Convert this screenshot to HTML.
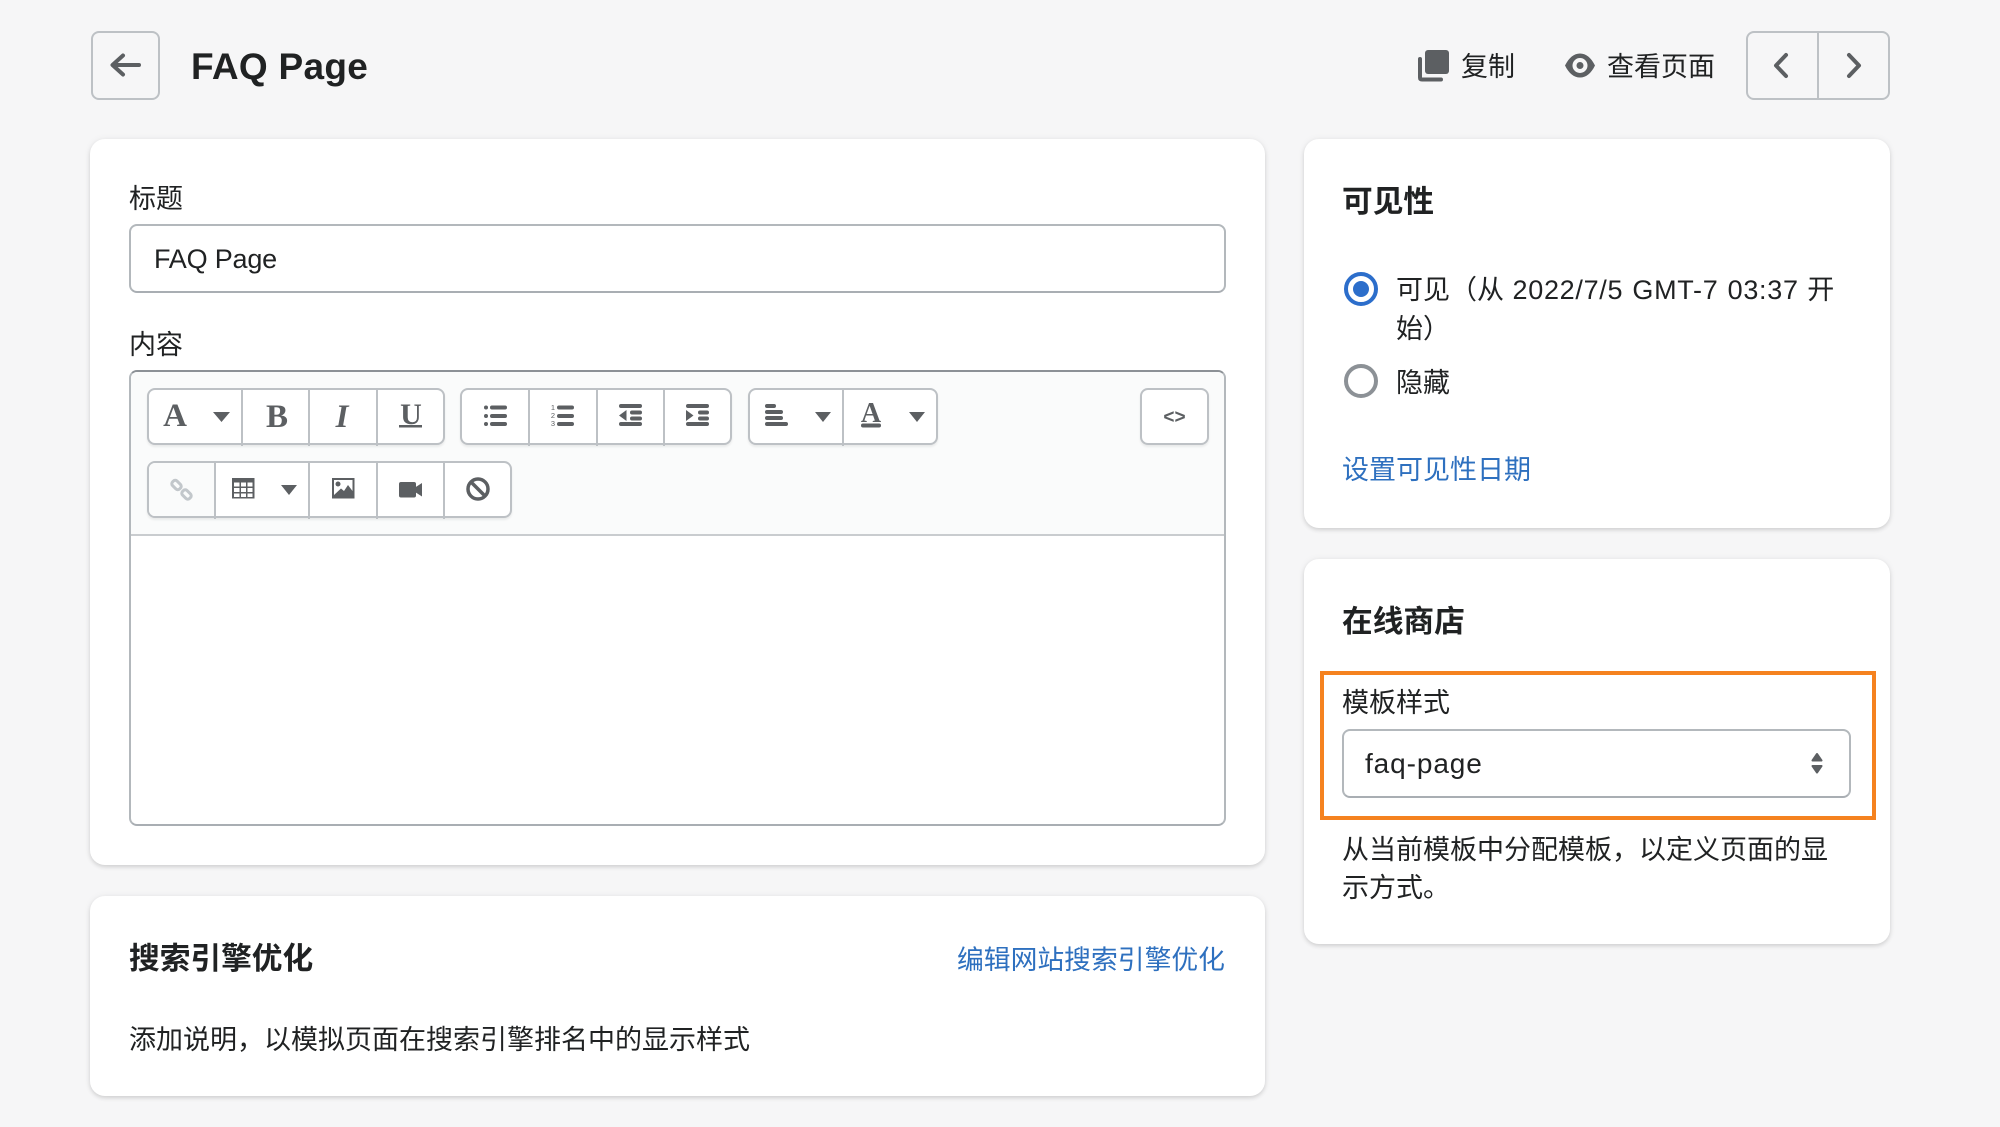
<!DOCTYPE html>
<html lang="zh-CN">
<head>
<meta charset="utf-8">
<title>FAQ Page</title>
<style>
html,body{margin:0;padding:0;width:2000px;height:1127px;overflow:hidden;background:#f6f6f7}
body{position:relative;font-family:"Liberation Sans","Noto Sans CJK SC",sans-serif;color:#202223;font-size:27px}
.t{position:absolute;white-space:nowrap;line-height:40px;height:40px}
.h{font-weight:700;font-size:30.7px}
.l{color:#2e70bf}
.card{position:absolute;background:#fff;border-radius:15px;box-shadow:0 0 8px rgba(23,24,24,.05),0 2px 4px rgba(0,0,0,.13)}
.box{position:absolute;box-sizing:border-box;background:#fff;border:2px solid #b3b8bc;border-bottom-color:#a9aeb3;border-radius:8px}
.btn{position:absolute;box-sizing:border-box;border:2px solid #bdc1c5;border-radius:8px;background:#fff;box-shadow:0 2px 2px rgba(0,0,0,.07)}
.sep{position:absolute;width:2px;background:#bdc1c5}
svg{position:absolute;left:0;top:0}
.s{font-family:"Liberation Serif",serif;font-weight:700;fill:#5c5f62;text-anchor:middle}
</style>
</head>
<body>
<!-- header -->
<div class="btn" style="left:91px;top:31px;width:69px;height:69px;background:#f6f6f7;box-shadow:none"></div>
<div class="t" style="left:191px;top:47px;font-size:37px;font-weight:700;letter-spacing:.3px">FAQ Page</div>
<div class="t" style="left:1461px;top:47px">复制</div>
<div class="t" style="left:1607px;top:47px">查看页面</div>
<div class="btn" style="left:1746px;top:31px;width:144px;height:69px;background:#f6f6f7;box-shadow:none"></div>
<div class="sep" style="left:1817px;top:32px;height:67px"></div>

<!-- cards -->
<div class="card" style="left:90px;top:139px;width:1175px;height:726px"></div>
<div class="card" style="left:90px;top:896px;width:1175px;height:200px"></div>
<div class="card" style="left:1304px;top:139px;width:586px;height:389px"></div>
<div class="card" style="left:1304px;top:559px;width:586px;height:385px"></div>

<!-- title field -->
<div class="t" style="left:129px;top:179px">标题</div>
<div class="box" style="left:129px;top:224px;width:1097px;height:69px"></div>
<div class="t" style="left:154px;top:239px;font-size:27px;letter-spacing:-.2px">FAQ Page</div>

<!-- editor -->
<div class="t" style="left:129px;top:325px">内容</div>
<div class="box" style="left:129px;top:370px;width:1097px;height:456px;border-top-color:#8c9196"></div>
<div style="position:absolute;left:131px;top:372px;width:1093px;height:162px;background:#fafbfb;border-radius:6px 6px 0 0;border-bottom:2px solid #c9cccf"></div>

<div class="btn" style="left:146.5px;top:387.5px;width:298.5px;height:57.5px"></div>
<div class="btn" style="left:460px;top:387.5px;width:272px;height:57.5px"></div>
<div class="btn" style="left:747.5px;top:387.5px;width:190.5px;height:57.5px"></div>
<div class="btn" style="left:1140px;top:387.5px;width:69px;height:57.5px"></div>
<div class="btn" style="left:146.5px;top:460.5px;width:365.5px;height:57.5px"></div>
<div style="position:absolute;left:149px;top:463px;width:65px;height:53px;background:#fafbfb;border-radius:6px 0 0 6px"></div>

<div class="sep" style="left:241px;top:388px;height:58px"></div>
<div class="sep" style="left:308px;top:388px;height:58px"></div>
<div class="sep" style="left:376px;top:388px;height:58px"></div>
<div class="sep" style="left:528px;top:388px;height:58px"></div>
<div class="sep" style="left:596px;top:388px;height:58px"></div>
<div class="sep" style="left:663px;top:388px;height:58px"></div>
<div class="sep" style="left:842px;top:388px;height:58px"></div>
<div class="sep" style="left:214px;top:461px;height:58px"></div>
<div class="sep" style="left:308px;top:461px;height:58px"></div>
<div class="sep" style="left:376px;top:461px;height:58px"></div>
<div class="sep" style="left:443px;top:461px;height:58px"></div>

<!-- SEO -->
<div class="t h" style="left:129px;top:939px">搜索引擎优化</div>
<div class="t l" style="left:957px;top:940px;font-size:26.8px">编辑网站搜索引擎优化</div>
<div class="t" style="left:129px;top:1020px">添加说明，以模拟页面在搜索引擎排名中的显示样式</div>

<!-- visibility -->
<div class="t h" style="left:1342px;top:182px">可见性</div>
<div class="t" style="left:1396px;top:270px;word-spacing:1px"><span style="letter-spacing:0">可见（从</span> <span style="letter-spacing:.7px">2022/7/5 GMT-7 03:37</span> 开</div>
<div class="t" style="left:1396px;top:309px">始）</div>
<div class="t" style="left:1396px;top:363px">隐藏</div>
<div class="t l" style="left:1342px;top:450px">设置可见性日期</div>

<!-- online store -->
<div class="t h" style="left:1342px;top:602px">在线商店</div>
<div style="position:absolute;box-sizing:border-box;left:1320px;top:671px;width:556px;height:149px;border:4px solid #f5821f"></div>
<div class="t" style="left:1342px;top:683px">模板样式</div>
<div class="box" style="left:1342px;top:729px;width:509px;height:69px"></div>
<div class="t" style="left:1365px;top:744px;font-size:28px;letter-spacing:.9px">faq-page</div>
<div class="t" style="left:1342px;top:830px">从当前模板中分配模板，以定义页面的显</div>
<div class="t" style="left:1342px;top:868px">示方式。</div>

<svg width="2000" height="1127" viewBox="0 0 2000 1127" fill="none">
  <!-- back arrow -->
  <path d="M139 65H114M123 55.5L112.5 65L123 74.5" stroke="#5c5f62" stroke-width="4" stroke-linecap="round" stroke-linejoin="round"/>
  <!-- duplicate -->
  <rect x="1425" y="50" width="24" height="24" rx="3" fill="#5c5f62"/>
  <path d="M1420 59V77.5Q1420 79.5 1422 79.5H1441" stroke="#5c5f62" stroke-width="4" stroke-linecap="round"/>
  <!-- eye -->
  <path fill-rule="evenodd" fill="#5c5f62" d="M1565 65.5C1569 57.5 1574 53.5 1580 53.5S1591 57.5 1595 65.5C1591 73.5 1586 77.5 1580 77.5S1569 73.5 1565 65.5ZM1580 58A7.5 7.5 0 1 0 1580 73A7.5 7.5 0 1 0 1580 58Z"/>
  <circle cx="1580" cy="65.5" r="3.5" fill="#5c5f62"/>
  <!-- nav chevrons -->
  <path d="M1786 55L1776 65.5L1786 76M1849 55L1859 65.5L1849 76" stroke="#5c5f62" stroke-width="4" stroke-linecap="round" stroke-linejoin="round"/>

  <!-- row 1 group 1 -->
  <text class="s" x="175" y="426" font-size="33">A</text>
  <path d="M213 412H230L221.5 422Z" fill="#5c5f62"/>
  <text class="s" x="277" y="427" font-size="33">B</text>
  <text class="s" x="342" y="427" font-size="33" font-style="italic">I</text>
  <text class="s" x="411" y="424" font-size="30">U</text>
  <rect x="399" y="425" width="23" height="2.5" fill="#5c5f62"/>

  <!-- lists and alignment -->
  <g fill="#5c5f62">
    <circle cx="486" cy="407.5" r="2"/><circle cx="486" cy="416" r="2"/><circle cx="486" cy="424" r="2"/>
    <rect x="490" y="405.5" width="17" height="4" rx="2"/><rect x="490" y="414" width="17" height="4" rx="2"/><rect x="490" y="422" width="17" height="4" rx="2"/>
    <!-- ordered -->
    <rect x="557" y="405.5" width="17" height="4" rx="2"/><rect x="557" y="414" width="17" height="4" rx="2"/><rect x="557" y="422" width="17" height="4" rx="2"/>
    <!-- outdent -->
    <rect x="619" y="404" width="23" height="4" rx="2"/><rect x="630" y="410.5" width="12" height="4" rx="2"/><rect x="630" y="416.5" width="12" height="4" rx="2"/><rect x="619" y="422" width="23" height="4" rx="2"/>
    <path d="M619 415.5L626.5 410V421Z"/>
    <!-- indent -->
    <rect x="686" y="404" width="23" height="4" rx="2"/><rect x="698" y="410.5" width="11" height="4" rx="2"/><rect x="698" y="416.5" width="11" height="4" rx="2"/><rect x="686" y="422" width="23" height="4" rx="2"/>
    <path d="M693.5 415.5L686 410V421Z"/>
    <!-- align left -->
    <rect x="765" y="404" width="11" height="4" rx="2"/><rect x="765" y="410" width="18" height="4" rx="2"/><rect x="765" y="416" width="18" height="4" rx="2"/><rect x="765" y="422" width="23" height="4" rx="2"/>
    <path d="M815 412H831L823 422Z"/>
    <!-- colour caret -->
    <path d="M909 412H925L917 422Z"/>
    <rect x="861" y="423.5" width="20" height="4" rx="2"/>
    <!-- row 2 carets -->
    <path d="M281 485H297L289 495Z"/>
  </g>
  <g font-family="Liberation Sans" font-size="7.5" fill="#5c5f62" text-anchor="middle">
    <text x="553" y="410">1</text><text x="553" y="418">2</text><text x="553" y="426">3</text>
  </g>
  <text class="s" x="871" y="422" font-size="28">A</text>

  <!-- link -->
  <g stroke="#c2c7cb" stroke-width="3" fill="none">
    <rect x="-5" y="-3.2" width="10" height="6.4" rx="2.6" transform="translate(176.5 485) rotate(45)"/>
    <rect x="-5" y="-3.2" width="10" height="6.4" rx="2.6" transform="translate(186.5 494.5) rotate(45)"/>
  </g>
  <!-- table -->
  <path fill-rule="evenodd" fill="#5c5f62" d="M232 478H254.5V498.5H232ZM234 482.5V486.5H239.5V482.5ZM241 482.5V486.5H246V482.5ZM247.5 482.5V486.5H252.5V482.5ZM234 488V492H239.5V488ZM241 488V492H246V488ZM247.5 488V492H252.5V488ZM234 493.5V497H239.5V493.5ZM241 493.5V497H246V493.5ZM247.5 493.5V497H252.5V493.5Z"/>
  <!-- image -->
  <path fill-rule="evenodd" fill="#5c5f62" d="M332 478H354.5V498.5H332ZM334 480V495L341 488.5L344 491L348 485L352.5 491V480Z"/>
  <circle cx="338" cy="484" r="2.5" fill="#5c5f62"/>
  <!-- video -->
  <rect x="399" y="482" width="17" height="15.5" rx="2" fill="#5c5f62"/>
  <path d="M415 487.5L422 483V496.5L415 492Z" fill="#5c5f62"/>
  <!-- block -->
  <circle cx="478" cy="489" r="10" stroke="#5c5f62" stroke-width="3.5"/>
  <path d="M471 482L485 496" stroke="#5c5f62" stroke-width="3.5"/>
  <!-- code -->
  <text x="1174.5" y="423" font-family="Liberation Sans" font-weight="700" font-size="19" fill="#5c5f62" text-anchor="middle">&lt;&gt;</text>

  <!-- radios -->
  <circle cx="1361" cy="289" r="15" stroke="#2c6ecb" stroke-width="4" fill="#fff"/>
  <circle cx="1361" cy="289" r="8" fill="#2c6ecb"/>
  <circle cx="1361" cy="381" r="15" stroke="#8c9196" stroke-width="4" fill="#fff"/>

  <!-- select arrows -->
  <path d="M1817 754L1821.5 760.5H1812.5Z M1817 772.5L1821.5 766H1812.5Z" fill="#5c5f62" stroke="#5c5f62" stroke-width="2" stroke-linejoin="round"/>
</svg>
</body>
</html>
